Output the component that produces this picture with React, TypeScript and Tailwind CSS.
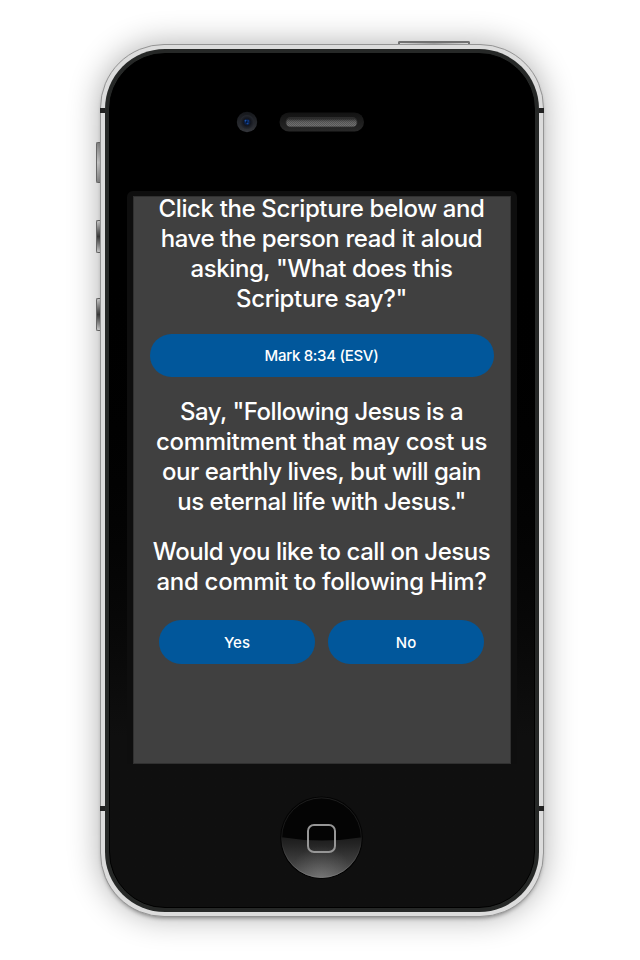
function Camera() {
  return (
    <svg width="22" height="22" viewBox="0 0 22 22" className="block shrink-0">
      <defs>
        <linearGradient id="cam" x1="0" y1="0" x2="0" y2="1">
          <stop offset="0" stopColor="#15171b" />
          <stop offset="1" stopColor="#33353a" />
        </linearGradient>
        <radialGradient id="lens">
          <stop offset="0" stopColor="#0d3170" />
          <stop offset="0.3" stopColor="#081f4a" />
          <stop offset="0.5" stopColor="#14161d" />
          <stop offset="0.85" stopColor="#23262d" />
          <stop offset="1" stopColor="#23262d" stopOpacity="0" />
        </radialGradient>
      </defs>
      <circle cx="11" cy="11" r="10.2" fill="url(#cam)" />
      <circle cx="11" cy="11" r="7.5" fill="url(#lens)" />
      <circle cx="9.5" cy="9.7" r="0.9" fill="#1d55ad" />
      <circle cx="12.2" cy="9.9" r="0.7" fill="#174a9d" />
      <circle cx="11.6" cy="12.4" r="0.9" fill="#174a9d" />
      <circle cx="10.8" cy="11" r="0.8" fill="#020814" />
    </svg>
  );
}

function Speaker() {
  return (
    <svg width="86" height="20" viewBox="0 0 86 20" className="block shrink-0">
      <defs>
        <linearGradient id="slot" x1="0" y1="0" x2="0" y2="1">
          <stop offset="0" stopColor="#121212" />
          <stop offset="1" stopColor="#282828" />
        </linearGradient>
        <linearGradient id="shade" x1="0" y1="0" x2="0" y2="1">
          <stop offset="0" stopColor="#1c1c1c" stopOpacity="0.75" />
          <stop offset="0.45" stopColor="#555555" stopOpacity="0.3" />
          <stop offset="1" stopColor="#777777" stopOpacity="0.3" />
        </linearGradient>
        <pattern id="mesh" width="2" height="2" patternUnits="userSpaceOnUse">
          <rect width="2" height="2" fill="#505050" />
          <rect width="1" height="1" fill="#707070" />
          <rect x="1" y="1" width="1" height="1" fill="#707070" />
        </pattern>
      </defs>
      <rect x="0.5" y="0.5" width="84.5" height="19" rx="9.5" fill="url(#slot)" />
      <rect x="6.5" y="5" width="72" height="10.5" rx="5" fill="#2c2c2c" />
      <rect x="7.5" y="7" width="70" height="7.5" rx="3.5" fill="url(#mesh)" />
      <rect x="7.5" y="7" width="70" height="7.5" rx="3.5" fill="url(#shade)" />
    </svg>
  );
}

function HomeButton() {
  return (
    <svg width="84" height="84" viewBox="0 0 84 84" className="block">
      <defs>
        <linearGradient id="home" x1="0" y1="0" x2="0" y2="1">
          <stop offset="0" stopColor="#000000" />
          <stop offset="0.5" stopColor="#1c1c1c" />
          <stop offset="0.6" stopColor="#262626" />
          <stop offset="1" stopColor="#565656" />
        </linearGradient>
        <radialGradient id="glow" cx="0.5" cy="1" r="0.4">
          <stop offset="0" stopColor="#ffffff" stopOpacity="0.18" />
          <stop offset="1" stopColor="#ffffff" stopOpacity="0" />
        </radialGradient>
        <linearGradient id="rim" x1="0" y1="0" x2="0" y2="1">
          <stop offset="0" stopColor="#242424" />
          <stop offset="0.5" stopColor="#1c1c1c" />
          <stop offset="1" stopColor="#808080" />
        </linearGradient>
        <clipPath id="lower">
          <path d="M0 41Q42 48 84 41V84H0Z" />
        </clipPath>
      </defs>
      <circle cx="41.5" cy="41.7" r="41.3" fill="#040404" />
      <circle cx="41.5" cy="41.7" r="40" fill="url(#home)" clipPath="url(#lower)" />
      <circle cx="41.5" cy="41.7" r="40" fill="url(#glow)" clipPath="url(#lower)" />
      <circle cx="41.5" cy="41.7" r="39.8" fill="none" stroke="url(#rim)" strokeWidth="0.8" />
      <rect x="28" y="29" width="27" height="27" rx="6" fill="none" stroke="#969696" strokeWidth="2" />
    </svg>
  );
}

const button = "flex items-center justify-center rounded-full bg-[#01579b] text-[15px] font-[450] text-white";
const side = "w-[6px] rounded-l-[2px] border border-r-0 border-[#777777]";
const volume = `${side} h-[33px] bg-linear-to-b from-[#eeeeee] via-[#444444] to-[#eeeeee]`;
const band = "absolute h-[5px] w-[5px] bg-[#222222]";

export default function App() {
  return (
    <div className="h-[960px] w-[640px] overflow-hidden bg-white pl-[96px] pt-[41px] font-['Inter','Liberation_Sans',sans-serif]">
      <div className="flex h-[3px] pl-[302px]">
        <div className="h-[4px] w-[72px] rounded-t-[2px] border-x-2 border-t-2 border-[#858585] bg-linear-to-r from-white via-[#bbbbbb] to-white" />
      </div>
      <div className="flex">
        <div className="flex w-[4px] flex-col gap-[37px] pt-[98px]">
          <div className={`${side} h-[41px] bg-linear-to-b from-[#999999] via-[#e5e5e5] to-[#999999]`} />
          <div className="flex flex-col gap-[45px]">
            <div className={volume} />
            <div className={volume} />
          </div>
        </div>

        <div className="relative h-[873px] w-[444px] rounded-[64px] border border-[#949494] bg-[#dcdcdc] p-[4px] shadow-[0_0_32px_rgba(0,0,0,0.32),0_3px_4px_-2px_rgba(0,0,0,0.4)]">
          <div className={`${band} -left-px top-[63px]`} />
          <div className={`${band} -right-px top-[63px]`} />
          <div className={`${band} -left-px top-[761px]`} />
          <div className={`${band} -right-px top-[761px]`} />

          <div className="h-full rounded-[60px] bg-[#262827] p-[4px]">
            <div className="flex h-full flex-col overflow-hidden rounded-[56px] border border-black bg-linear-to-b from-black from-20% to-[#0f0f0f] to-80%">
              <div className="flex h-[137px] items-start gap-[21px] pl-[126px] pt-[57px]">
                <Camera />
                <div className="pt-px">
                  <Speaker />
                </div>
              </div>

              <div className="mx-auto w-[390px] rounded-t-[6px] bg-[#0e0e0e] px-[6px] pt-[5px]">
                <main className="flex h-[568px] flex-col items-center border border-[#303030] bg-[#404040] pr-px text-center text-[24px] font-medium leading-[30px] text-white">
                  <p className="-mt-[3px]">
                    <span className="tracking-[-0.36px]">Click the Scripture below and</span>
                    <br />
                    <span className="tracking-[-0.4px]">have the person read it aloud</span>
                    <br />
                    <span className="tracking-[-0.43px]">asking, "What does this</span>
                    <br />
                    <span className="tracking-[-0.35px]">Scripture say?"</span>
                  </p>
                  <button className={`${button} mt-[20px] h-[43px] w-[344px]`}>
                    <span className="tracking-[-0.3px]">Mark 8:34 (ESV)</span>
                  </button>
                  <p className="mt-[20px]">
                    <span className="tracking-[-0.5px]">Say, "Following Jesus is a</span>
                    <br />
                    <span className="tracking-[-0.27px]">commitment that may cost us</span>
                    <br />
                    <span className="tracking-[-0.48px]">our earthly lives, but will gain</span>
                    <br />
                    <span className="tracking-[-0.45px]">us eternal life with Jesus."</span>
                  </p>
                  <p className="mt-[20px]">
                    <span className="tracking-[-0.46px]">Would you like to call on Jesus</span>
                    <br />
                    <span className="tracking-[-0.3px]">and commit to following Him?</span>
                  </p>
                  <div className="mt-[23px] flex gap-[13px]">
                    <button className={`${button} h-[44px] w-[156px] pt-[2px]`}>Yes</button>
                    <button className={`${button} h-[44px] w-[156px] pt-[2px]`}>No</button>
                  </div>
                </main>
              </div>

              <div className="flex justify-center pt-[32px]">
                <HomeButton />
              </div>
            </div>
          </div>
        </div>
      </div>
    </div>
  );
}
